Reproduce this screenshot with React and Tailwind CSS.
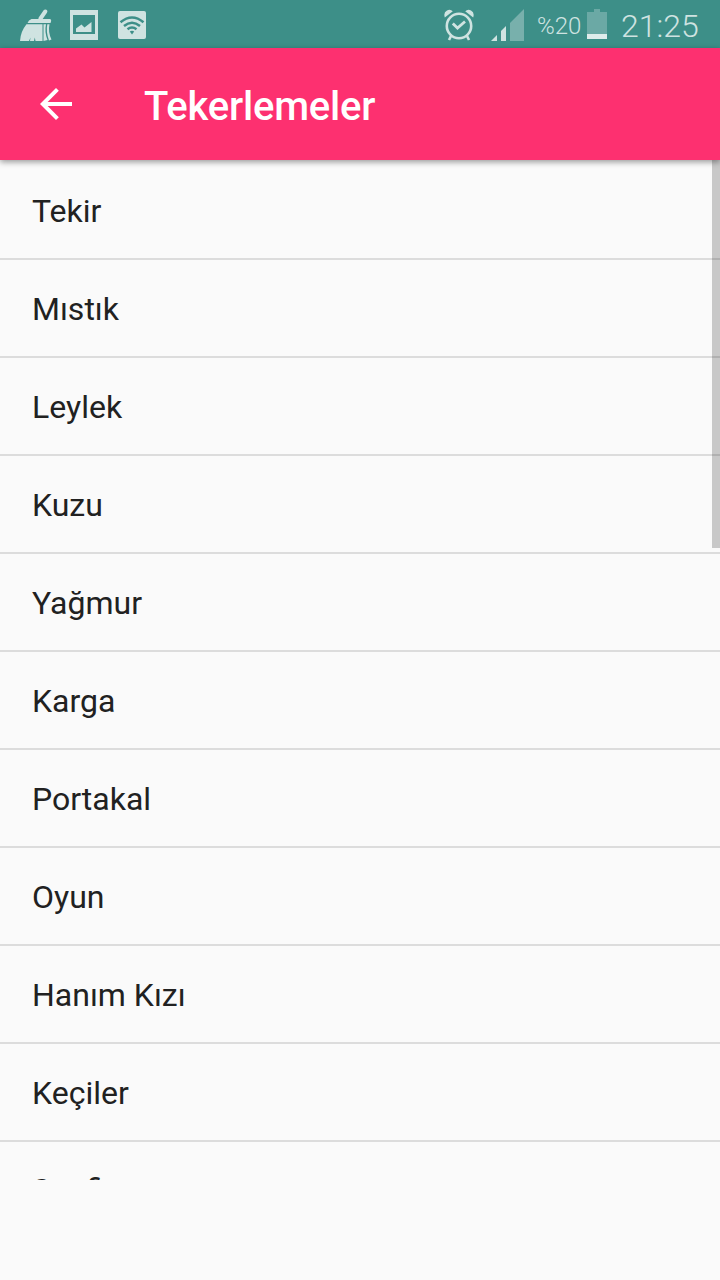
import React from "react";

const ITEMS = [
  "Tekir",
  "Mıstık",
  "Leylek",
  "Kuzu",
  "Yağmur",
  "Karga",
  "Portakal",
  "Oyun",
  "Hanım Kızı",
  "Keçiler",
];

function BroomIcon() {
  return (
    <svg width="32" height="32" viewBox="0 0 32 32" className="block">
      <path d="M20.500 9.500 25.300 2.500" fill="none" stroke="#cfe3e1" strokeWidth="4" strokeLinecap="round" />
      <path d="M11.500 10H30Q32 10.500 30.500 14H7.500Q8.500 10.800 11.500 10Z" />
      <path d="M6.500 15.200H22.500V32H15.500L14.800 28.500 14 32H10L10.500 28.500 9 32H0Q.5 22.500 6.500 15.200Z" />
      <path d="M23.500 15.200H26Q24.300 23 27.500 31L23.500 32Z" />
      <path d="M27.300 15.200H29.500Q27.800 23 31.500 30.500L29 31.500Q25.800 23 27.300 15.200Z" />
    </svg>
  );
}

function PictureIcon() {
  return (
    <svg width="28" height="30" viewBox="0 0 28 30" className="block">
      <path fillRule="evenodd" d="M0 0H28V30H0ZM3 5V24H25V5Z" />
      <path d="M6 22V18.500L11.500 14.500 14.500 17.500 21.500 12V22Z" />
    </svg>
  );
}

function WifiIcon() {
  return (
    <svg width="28" height="28" viewBox="0 0 28 28" className="block">
      <rect width="28" height="28" rx="2" />
      <g fill="none" stroke="#3d8f88" strokeWidth="2.500">
        <path d="M2.500 11.300Q14 1.700 25.500 11.300" />
        <path d="M6 15Q14 8.500 22 15" />
        <path d="M9.500 18.300Q14 14.700 18.500 18.300" />
      </g>
      <path fill="#3d8f88" d="M11.800 20.500Q14 18.800 16.200 20.500L14 23.500Z" />
    </svg>
  );
}

function AlarmIcon() {
  return (
    <svg width="30" height="32" viewBox="0 0 30 32" className="block">
      <g fill="none" stroke="#cfe3e1">
        <circle cx="15" cy="17" r="12.200" strokeWidth="2.600" />
        <path d="M8.800 14.500 13.500 19 21 12.500" strokeWidth="2.800" />
        <path d="M7 27 5 31M23 27 25 31" strokeWidth="2.600" />
      </g>
      <path d="M.8 8.500Q-.8 3.500 3 1.500Q6-.5 8.800 2.200Z" />
      <path d="M29.200 8.500Q30.800 3.500 27 1.500Q24-.5 21.200 2.200Z" />
    </svg>
  );
}

function SignalIcon() {
  return (
    <svg width="34" height="32" viewBox="0 0 34 32" className="block">
      <path d="M0 32 6 26V32Z" />
      <path d="M10 22 15 17V32H10Z" />
      <path d="M19 14 33 0V32H19Z" fill="#78b0ac" />
    </svg>
  );
}

function BatteryIcon() {
  return (
    <svg width="20" height="30" viewBox="0 0 20 30" className="block">
      <path d="M7 0H13V3H20V25H0V3H7Z" fill="#6ba9a5" />
      <path d="M0 25H20V30H0Z" fill="#dfeceb" />
    </svg>
  );
}

function StatusBar() {
  return (
    <div className="flex h-12 bg-[#3d8f88] fill-[#cfe3e1] text-[#cfe3e1]">
      <div className="ml-5 mt-[9px]"><BroomIcon /></div>
      <div className="ml-[18px] mt-[10px]"><PictureIcon /></div>
      <div className="ml-5 mt-[11px]"><WifiIcon /></div>
      <div className="ml-auto mt-[9px]"><AlarmIcon /></div>
      <div className="ml-[17px] mt-[9px]"><SignalIcon /></div>
      <span className="ml-3 mt-[12px] w-[45px] whitespace-nowrap text-[24px] font-[350] leading-[28px]">%20</span>
      <div className="ml-[5px] mt-[9px]"><BatteryIcon /></div>
      <span className="ml-[14px] mr-[19px] mt-[7px] w-[80px] whitespace-nowrap text-[32px] font-[350] leading-[38px]">21:25</span>
    </div>
  );
}

function AppBar() {
  return (
    <header className="relative z-10 flex h-28 items-center bg-[#fd3070] text-white shadow-[0_2px_6px_rgba(0,0,0,0.4)]">
      <button aria-label="Geri" className="ml-8 block">
        <svg width="48" height="48" viewBox="0 0 24 24" fill="currentColor" className="block">
          <path d="M20 11H7.830l5.590-5.590L12 4l-8 8 8 8 1.410-1.410L7.830 13H20z" />
        </svg>
      </button>
      <h1 className="ml-16 mt-1.5 text-[40px] font-medium leading-[48px] tracking-[-0.2px]">Tekerlemeler</h1>
    </header>
  );
}

function ListRow({ className = "pt-0.5", children }) {
  return (
    <li className={`h-[98px] border-b-2 border-[#dcdcdc] px-8 text-[32px] leading-[94px] text-[#212121] ${className}`}>
      {children}
    </li>
  );
}

export default function App() {
  return (
    <div className="h-[1280px] w-[720px] overflow-hidden bg-[#fafafa] font-['Roboto',sans-serif]">
      <StatusBar />
      <AppBar />
      <main className="relative h-[1020px] overflow-hidden pt-0.5">
        <ul>
          {ITEMS.map((item) => (
            <ListRow key={item}>{item}</ListRow>
          ))}
          <ListRow className="pt-px">
            <span className="tracking-[1px]">Sey</span>fi
          </ListRow>
        </ul>
        {/* scroll indicator */}
        <div className="absolute right-0 top-0 h-[388px] w-2 bg-black/20" />
      </main>
    </div>
  );
}
